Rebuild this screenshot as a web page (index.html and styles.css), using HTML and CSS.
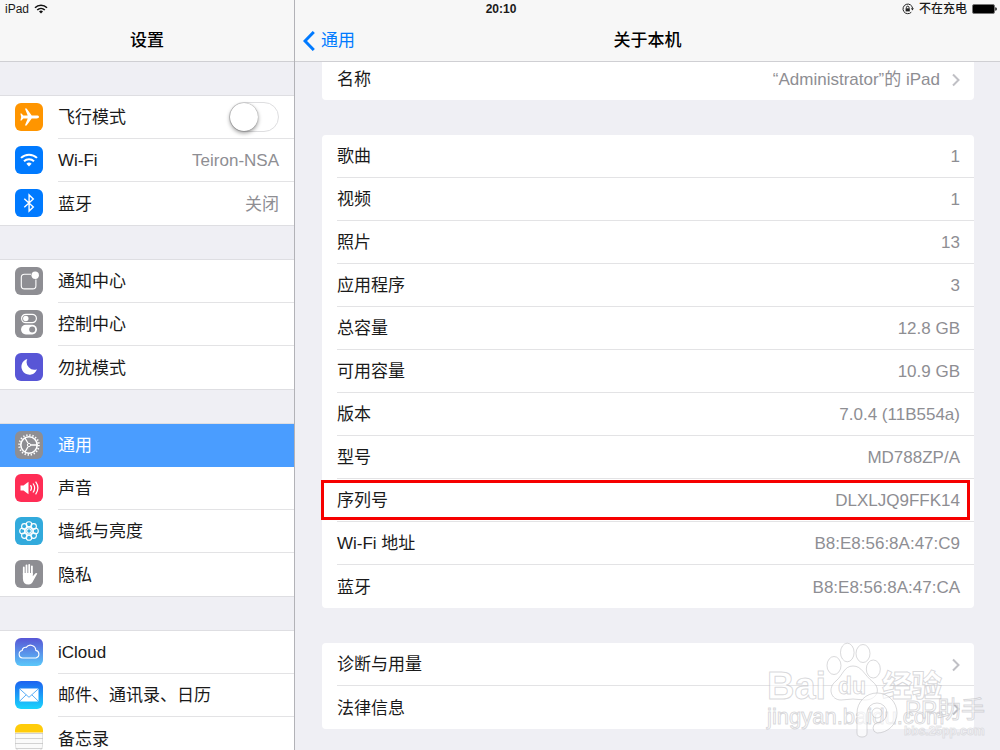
FILE: index.html
```html
<!DOCTYPE html>
<html lang="zh-CN">
<head>
<meta charset="utf-8">
<meta name="viewport" content="width=device-width, initial-scale=1">
<title>设置</title>
<link rel="stylesheet" href="styles.css">
</head>
<body>
<div class="app">
  <div class="status">
    <div class="status-side">
      <span>iPad</span>
      <svg width="14" height="10" viewBox="0 0 14 10" fill="none" stroke="#111" stroke-width="1.6"><path d="M1 3.7a8.6 8.6 0 0 1 12 0M3.2 6a5.5 5.5 0 0 1 7.6 0"/><path d="M7 9.6 5 7.6a2.8 2.8 0 0 1 4 0z" fill="#111" stroke="none"/></svg>
    </div>
    <strong class="status-time">20:10</strong>
    <div class="status-side status-end">
      <svg width="12" height="12" viewBox="0 0 12 12" fill="none" stroke="#222"><path d="M9.3 9.2A4.8 4.8 0 1 1 10.6 5.4"/><path d="M8.9 5.2h3L10.4 7.4z" fill="#222" stroke="none"/><path d="M3.6 5.3h4.2v3.1H3.6z" fill="#222" stroke="none"/><path d="M4.4 5.4V4.5a1.3 1.3 0 0 1 2.6 0v.9"/></svg>
      <span>不在充电</span>
      <svg width="25" height="10" viewBox="0 0 25 10"><rect x=".5" y=".5" width="22" height="9" rx="1.5" fill="#000" stroke="#777"/><path d="M23.3 3.2q1.5.3 1.5 1.8t-1.5 1.8z" fill="#000"/></svg>
    </div>
  </div>

  <aside class="sidebar">
    <header class="nav"><h1 class="nav-title">设置</h1></header>
    <nav class="menu">
      <div class="group">
        <div class="item">
          <svg class="icon" viewBox="0 0 28 28"><rect width="28" height="28" rx="6" fill="#ff9500"/><path fill="#fff" d="M24 14c0-.9-1-1.4-2.3-1.4h-5L11.6 5.5H9.9l2.8 7.1H8.3L6.5 10.400H5.400L6.200 14l-.8 3.600h1.100l1.800-2.200h4.400l-2.800 7.100h1.700l5.100-7.100h5c1.300 0 2.300-.5 2.300-1.400z"/></svg>
          <div class="item-body"><label for="flight">飞行模式</label><input class="switch" type="checkbox" role="switch" id="flight"></div>
        </div>
        <a class="item" href="#wifi">
          <svg class="icon" viewBox="0 0 28 28"><rect width="28" height="28" rx="6" fill="#007aff"/><g fill="none" stroke="#fff" stroke-width="2"><path d="M6 11.900a11.500 11.500 0 0 1 16 0M9 15.200a7.300 7.300 0 0 1 10 0"/></g><path d="M14 20.500 11.400 17.800a3.800 3.800 0 0 1 5.200 0z" fill="#fff"/></svg>
          <span class="item-body"><span>Wi-Fi</span><span class="value">Teiron-NSA</span></span>
        </a>
        <a class="item" href="#bluetooth">
          <svg class="icon" viewBox="0 0 28 28"><rect width="28" height="28" rx="6" fill="#007aff"/><path d="m9.300 9.800 9 8.200-4.200 4V6l4.200 4-9 8.200" fill="none" stroke="#fff" stroke-width="1.400"/></svg>
          <span class="item-body"><span>蓝牙</span><span class="value">关闭</span></span>
        </a>
      </div>

      <div class="group">
        <a class="item" href="#notify">
          <svg class="icon" viewBox="0 0 28 28"><rect width="28" height="28" rx="6" fill="#8e8e93"/><path d="M16 7.300H9.500a3.200 3.200 0 0 0-3.200 3.200v8.200a3.200 3.200 0 0 0 3.200 3.200h8.200a3.200 3.200 0 0 0 3.200-3.200V12.500" fill="none" stroke="#fff" stroke-width="1.100"/><circle cx="20.200" cy="8.200" r="3.700" fill="#fff"/></svg>
          <span class="item-body">通知中心</span>
        </a>
        <a class="item" href="#control">
          <svg class="icon" viewBox="0 0 28 28"><rect width="28" height="28" rx="6" fill="#8e8e93"/><rect x="6.600" y="4.300" width="14.800" height="8.400" rx="4.200" fill="none" stroke="#fff" stroke-width="1.200"/><circle cx="10.800" cy="8.500" r="2.700" fill="#fff"/><rect x="6" y="14.800" width="16" height="9.600" rx="4.800" fill="#fff"/><circle cx="17.200" cy="19.600" r="3" fill="#8e8e93"/></svg>
          <span class="item-body">控制中心</span>
        </a>
        <a class="item" href="#dnd">
          <svg class="icon" viewBox="0 0 28 28"><rect width="28" height="28" rx="6" fill="#5856d6"/><path d="M12.300 6A8 8 0 1 0 22 16.300 7.700 7.700 0 0 1 12.300 6z" fill="#fff"/></svg>
          <span class="item-body">勿扰模式</span>
        </a>
      </div>

      <div class="group">
        <a class="item selected" href="#general" aria-current="page">
          <svg class="icon" viewBox="0 0 28 28"><rect width="28" height="28" rx="6" fill="#8e8e93"/><g fill="none" stroke="#fff"><circle cx="14" cy="14" r="9.900" stroke-width="1.800" stroke-dasharray="1.300 1.810"/><circle cx="14" cy="14" r="8.200" stroke-width="1.600"/><circle cx="14" cy="14" r="1.600" stroke-width="1"/><path d="M15.800 14H22M13 12.200 10 7M13 15.800 10 21" stroke-width="1.300"/></g></svg>
          <span class="item-body">通用</span>
        </a>
        <a class="item" href="#sound">
          <svg class="icon" viewBox="0 0 28 28"><rect width="28" height="28" rx="6" fill="#ff2d55"/><path d="M5.500 11.500h3l5-3.800v12.600l-5-3.800h-3z" fill="#fff"/><g fill="none" stroke="#fff" stroke-width="1.200"><path d="M15.500 11.200q2 2.800 0 5.600M18 9.500q3.300 4.500 0 9M20.600 7.700q4.600 6.300 0 12.600"/></g></svg>
          <span class="item-body">声音</span>
        </a>
        <a class="item" href="#wallpaper">
          <svg class="icon" viewBox="0 0 28 28"><rect width="28" height="28" rx="6" fill="#32aadc"/><g fill="none" stroke="#fff" stroke-width="1.100"><circle cx="14" cy="14" r="2.300"/><circle cx="14" cy="7.500" r="2.800"/><circle cx="18.600" cy="9.400" r="2.800"/><circle cx="20.500" cy="14" r="2.800"/><circle cx="18.600" cy="18.600" r="2.800"/><circle cx="14" cy="20.500" r="2.800"/><circle cx="9.400" cy="18.600" r="2.800"/><circle cx="7.500" cy="14" r="2.800"/><circle cx="9.400" cy="9.400" r="2.800"/><circle cx="14" cy="14" r="4.400"/></g></svg>
          <span class="item-body">墙纸与亮度</span>
        </a>
        <a class="item" href="#privacy">
          <svg class="icon" viewBox="0 0 28 28"><rect width="28" height="28" rx="6" fill="#8e8e93"/><g fill="none" stroke="#fff" stroke-width="1.800" stroke-linecap="round"><path d="M8.800 15V7.400M11.500 14V5.300M14.200 14V4.800M16.900 14V6.300"/></g><path d="M7.900 13h9.900v3.200l2.700-3q1.100-.6 1.800.3l-4 7.300Q17 24.500 13.500 24.500q-5.600 0-5.600-6z" fill="#fff"/></svg>
          <span class="item-body">隐私</span>
        </a>
      </div>

      <div class="group">
        <a class="item" href="#icloud">
          <svg class="icon" viewBox="0 0 28 28"><defs><linearGradient id="cloud" x2="0" y2="1"><stop stop-color="#5856d6"/><stop offset="1" stop-color="#5ac8fa"/></linearGradient></defs><rect width="28" height="28" rx="6" fill="url(#cloud)"/><path d="M7.500 20a3.800 3.800 0 0 1-.3-7.500 3.200 3.200 0 0 1 4-3.100 5.300 5.300 0 0 1 9.600 3A3.900 3.900 0 0 1 21 20z" fill="none" stroke="#fff" stroke-width="1.100"/></svg>
          <span class="item-body">iCloud</span>
        </a>
        <a class="item" href="#mail">
          <svg class="icon" viewBox="0 0 28 28"><defs><linearGradient id="mail-sky" x2="0" y2="1"><stop stop-color="#1d62f0"/><stop offset="1" stop-color="#1ad5fd"/></linearGradient></defs><rect width="28" height="28" rx="6" fill="url(#mail-sky)"/><rect x="4.500" y="7.500" width="19" height="13" rx="1" fill="#fff"/><path d="m4.800 8 9.200 8.300L23.200 8M4.800 20l6.400-6.200M23.200 20l-6.400-6.200" fill="none" stroke="#4aa5f5" stroke-width=".9"/></svg>
          <span class="item-body">邮件、通讯录、日历</span>
        </a>
        <a class="item" href="#notes">
          <svg class="icon" viewBox="0 0 28 28"><defs><clipPath id="note-clip"><rect width="28" height="28" rx="6"/></clipPath></defs><g clip-path="url(#note-clip)"><path fill="#fafafa" d="M0 0h28v28H0z"/><path fill="#ffcc0a" d="M0 0h28v8.500H0z"/><path stroke="#d2d2d2" d="M0 9.500h28M0 14.500h28M0 19.500h28M0 24.500h28"/></g><path d="M.5 9v13a5.500 5.500 0 0 0 5.500 5.500h16a5.500 5.500 0 0 0 5.500-5.500V9" fill="none" stroke="#bbb" stroke-opacity=".4"/></svg>
          <span class="item-body">备忘录</span>
        </a>
      </div>
    </nav>
  </aside>

  <main class="detail">
    <header class="nav">
      <a class="back" href="#general"><svg width="12" height="20" viewBox="0 0 12 20" fill="none" stroke="#007aff" stroke-width="3"><path d="M10.800 1 2 10l8.800 9"/></svg>通用</a>
      <h2 class="nav-title">关于本机</h2>
    </header>
    <div class="cards">
      <ul class="card">
        <li class="row"><span>名称</span><span class="value">“Administrator”的 iPad</span><svg class="chevron" viewBox="0 0 9 14"><path d="m2 1.500 5.500 5.500L2 12.500"/></svg></li>
      </ul>
      <ul class="card">
        <li class="row"><span>歌曲</span><span class="value">1</span></li>
        <li class="row"><span>视频</span><span class="value">1</span></li>
        <li class="row"><span>照片</span><span class="value">13</span></li>
        <li class="row"><span>应用程序</span><span class="value">3</span></li>
        <li class="row"><span>总容量</span><span class="value">12.8 GB</span></li>
        <li class="row"><span>可用容量</span><span class="value">10.9 GB</span></li>
        <li class="row"><span>版本</span><span class="value">7.0.4 (11B554a)</span></li>
        <li class="row"><span>型号</span><span class="value">MD788ZP/A</span></li>
        <li class="row marked"><span>序列号</span><span class="value">DLXLJQ9FFK14</span></li>
        <li class="row"><span>Wi-Fi 地址</span><span class="value">B8:E8:56:8A:47:C9</span></li>
        <li class="row"><span>蓝牙</span><span class="value">B8:E8:56:8A:47:CA</span></li>
      </ul>
      <ul class="card">
        <li class="row"><span>诊断与用量</span><svg class="chevron" viewBox="0 0 9 14"><path d="m2 1.500 5.500 5.500L2 12.500"/></svg></li>
        <li class="row"><span>法律信息</span><svg class="chevron" viewBox="0 0 9 14"><path d="m2 1.500 5.500 5.500L2 12.500"/></svg></li>
      </ul>
    </div>
  </main>

  <svg class="watermark" width="240" height="110" viewBox="0 0 240 110">
    <g class="mark-line">
      <ellipse cx="74" cy="25.500" rx="7" ry="9"/><ellipse cx="87.300" cy="12.500" rx="6.800" ry="9.300"/><ellipse cx="103" cy="13.500" rx="7" ry="9"/><ellipse cx="113.300" cy="29" rx="7" ry="9"/>
      <path d="M93 26C84 26 83 35 76 41 67 48 71 60 81 60q12-2 24 0c11 0 17-10 8-18C104 35 102 26 93 26z"/>
      <text x="7" y="59" class="mark-bai">Bai</text>
      <text x="78" y="54" class="mark-du">du</text>
      <text x="122" y="56" class="mark-cjk">经验</text>
      <text x="7" y="84" class="mark-url">jingyan.baidu.com</text>
      <path d="M97 73a20 20 0 1 1 20 20q-4-1-4-5t4-5a10 10 0 1 0-10-10v20q0 4-5 4t-5-4z"/>
      <circle cx="117" cy="73" r="5"/>
      <text x="145" y="78" class="mark-pp">PP助手</text>
      <text x="144" y="95" class="mark-bbs">bbs.25pp.com</text>
    </g>
  </svg>
</div>
</body>
</html>
```
FILE: styles.css
```css
* { box-sizing: border-box; }

body {
  margin: 0;
  background: #efeff4;
  color: #1a1a1a;
  font: 17px/20px "Liberation Sans", "Noto Sans CJK SC", sans-serif;
}

a { color: inherit; text-decoration: none; }

.app {
  position: relative;
  display: flex;
  height: 100vh;
  overflow: hidden;
}

.status {
  position: absolute;
  z-index: 3;
  top: 0;
  left: 0;
  right: 0;
  display: flex;
  align-items: center;
  height: 18px;
  padding: 0 3px 0 5px;
  font-size: 12px;
  line-height: 18px;
}
.status-side { flex: 1; display: flex; align-items: center; gap: 5px; }
.status-end { justify-content: flex-end; font-weight: 500; }

.sidebar {
  flex: 0 0 295px;
  border-right: 1px solid #b2b2b7;
  overflow: hidden;
}
.detail { flex: 1; overflow: hidden; }

.nav {
  position: relative;
  z-index: 1;
  display: flex;
  align-items: center;
  justify-content: center;
  height: 62px;
  padding-top: 21px;
  background: #f7f7f7;
  border-bottom: 1px solid #cfcfd3;
}
.nav-title { margin: 0; font-size: 17px; line-height: 20px; font-weight: 500; color: #000; }
.back {
  position: absolute;
  left: 8px;
  display: flex;
  align-items: center;
  gap: 6px;
  color: #007aff;
}

.menu { display: flex; flex-direction: column; gap: 35px; padding-top: 34px; }
.group {
  background: #fff;
  box-shadow: 0 -1px #dedee2, 0 1px #dedee2;
}
.item { display: flex; align-items: center; gap: 15px; height: 43px; padding-left: 15px; }
.icon { flex: none; width: 28px; height: 28px; margin-bottom: 2px; }
.item-body {
  flex: 1;
  display: flex;
  align-items: center;
  justify-content: space-between;
  height: 43px;
  padding: 2px 15px 0 0;
  border-bottom: 1px solid #e3e3e5;
}
.item:last-child .item-body { border-bottom: 0; }
.selected { background: #4a9dff; color: #fff; }
.selected .item-body { border-color: #4a9dff; }
.value { color: #8e8e93; }

.switch {
  appearance: none;
  display: flex;
  width: 50px;
  height: 30px;
  margin: 0 0 2px;
  border: 1px solid #dedee0;
  border-radius: 15px;
  background: #fff;
}
.switch::before {
  content: "";
  width: 28px;
  height: 28px;
  border-radius: 50%;
  background: #fff;
  box-shadow: 0 2px 4px rgba(0, 0, 0, .4), 0 0 1px rgba(0, 0, 0, .5);
}
.switch:checked { justify-content: flex-end; background: #4cd964; }

.cards {
  display: flex;
  flex-direction: column;
  gap: 35px;
  margin-top: -5px;
  padding: 0 26px 0 27px;
}
.card {
  margin: 0;
  padding: 0 0 0 15px;
  list-style: none;
  background: #fff;
  border-radius: 4px;
}
.row {
  position: relative;
  display: flex;
  align-items: center;
  justify-content: space-between;
  height: 43px;
  padding: 2px 14px 0 0;
  border-bottom: 1px solid #e3e3e5;
}
.row:last-child { border-bottom: 0; }
.row .value { margin-left: auto; }
.chevron { width: 9px; height: 14px; fill: none; stroke: #c0c0c5; stroke-width: 2; }
.value + .chevron { margin-left: 11px; }
.marked::after {
  content: "";
  position: absolute;
  inset: 1px 4px 1px -16px;
  border: 3px solid #f60000;
}

.watermark { position: absolute; z-index: 4; right: 0; bottom: 0; pointer-events: none; }
.mark-line {
  fill: #fff;
  fill-opacity: .6;
  stroke: #aaaab0;
  stroke-opacity: .45;
  stroke-width: 1;
  font-family: "Liberation Sans", "Noto Sans CJK SC", sans-serif;
  font-weight: 700;
}
.mark-bai { font-size: 38px; }
.mark-du { font-size: 23px; }
.mark-cjk { font-size: 30px; font-weight: 900; }
.mark-url { font-size: 22px; font-weight: 400; }
.mark-pp { font-size: 24px; font-weight: 400; }
.mark-bbs { font-size: 12px; stroke-opacity: .3; }
```
